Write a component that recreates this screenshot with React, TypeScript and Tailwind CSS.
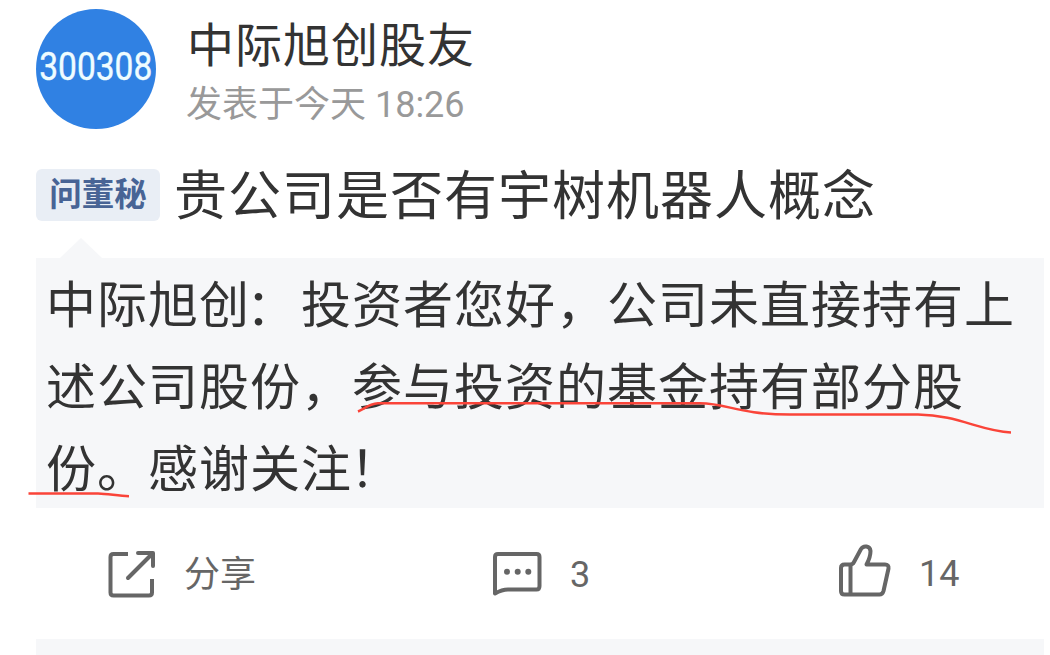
const ShareIcon = () => (
  <svg className="h-[50px] w-[50px]" viewBox="0 0 50 50" fill="none" stroke="#666" strokeWidth="4" strokeLinecap="round" strokeLinejoin="round">
    <path strokeLinecap="butt" d="M21 5H6.500Q3.500 5 3.500 8V43.500Q3.500 46.500 6.500 46.500H42Q45 46.500 45 43.500V30" />
    <path d="M31 4H46V17" />
    <path d="M45 5L21 29" />
  </svg>
)

const CommentIcon = () => (
  <svg className="h-[50px] w-[54px]" viewBox="0 0 54 50" fill="none" stroke="#666" strokeWidth="4" strokeLinejoin="round">
    <path d="M8 5H46.500Q49.500 5 49.500 8V37Q49.500 40.500 46.500 40.500H18Q12 40.500 5 44.500V8Q5 5 8 5Z" />
    <g fill="#666" stroke="none">
      <circle cx="17" cy="22.700" r="3" />
      <circle cx="27.700" cy="22.700" r="3" />
      <circle cx="38.300" cy="22.700" r="3" />
    </g>
  </svg>
)

const LikeIcon = () => (
  <svg className="mb-[10px] h-[56px] w-[56px]" viewBox="0 0 56 56" fill="none" stroke="#666" strokeWidth="4" strokeLinejoin="round">
    <path d="M15 23.500H7.500Q4 23.500 4 27V50Q4 53.500 7.500 53.500H42.500Q45.500 53.500 46.500 50L51.500 27.500Q52 23.500 48 23.500H29.500C32 19 33.500 14 33.500 10C33 4.800 26.500 4 24 8L17 21Q16 23.500 13 23.500" />
    <path d="M13.500 24V53" />
  </svg>
)

// red pen strokes under the part of the answer that matters
const Marks = () => (
  <svg className="pointer-events-none absolute left-0 top-0 h-[655px] w-[1050px]" viewBox="0 0 1050 655" fill="none" stroke="#fa4439" strokeWidth="2.500">
    <path d="M358 411.500C364 409 369 404 378 403.300H700C728 403.500 738 414.500 790 414.500H918C958 415 980 431 1011 432.500" />
    <path d="M28.500 493.500H98C108 493.700 118 496 129 496.300" />
  </svg>
)

const App = () => {
  return (
    <div lang="zh-CN" className="relative h-[655px] w-[1050px] overflow-hidden bg-white font-[Roboto,'Noto_Sans_CJK_SC',sans-serif] text-[#333]">
      <header className="flex h-[129px] pl-9 pt-[9px]">
        <div className="flex h-[120px] w-[120px] shrink-0 items-center justify-center rounded-full bg-[#3081e3]">
          <span className="-mt-1 scale-x-[0.86] text-[39px] leading-none text-[#effcff] [-webkit-text-stroke:0.4px_#effcff]">300308</span>
        </div>
        <div className="ml-[31px] flex flex-col">
          <h1 className="mt-1 h-[66px] whitespace-nowrap text-[47px] leading-[66px] tracking-[1px]">中际旭创股友</h1>
          <p className="-ml-px h-[50px] whitespace-nowrap text-[36px] leading-[52px] text-[#999]">发表于今天 18:26</p>
        </div>
      </header>

      <section className="mt-[26px] flex h-[80px] items-center pl-9">
        <span className="flex h-[52px] w-[124px] shrink-0 items-center justify-center rounded-md bg-[#e9eef5] text-[32.5px] font-bold text-[#486495]">问董秘</span>
        <h2 className="ml-[14px] whitespace-nowrap pt-1 text-[53px] leading-[80px] tracking-[1px]">贵公司是否有宇树机器人概念</h2>
      </section>

      <svg className="ml-[60px] mt-[3px] block h-5 w-[42px]" viewBox="0 0 42 20">
        <path d="M0 20L21 0L42 20Z" fill="#f6f7f9" />
      </svg>
      <section className="ml-9 h-[250px] w-[1008px] bg-[#f6f7f9] pl-[10px] pt-[7px] text-[50px] leading-[82px] tracking-[1px]">
        <p className="whitespace-nowrap">中际旭创<span className="inline-block -translate-x-1 translate-y-0.5">：</span>投资者您好，公司未直接持有上</p>
        <p className="whitespace-nowrap">述公司股份，参与投资的基金持有部分股</p>
        <p className="whitespace-nowrap">份。感谢关注<span className="inline-block -translate-x-0.5">！</span></p>
      </section>

      <footer className="flex h-[131px] items-center text-[36px] leading-none text-[#666]">
        <div className="flex w-[350px] items-center pl-[107px]">
          <ShareIcon />
          <span className="ml-[27px] pt-[3px]">分享</span>
        </div>
        <div className="flex w-[350px] items-center pl-[140px]">
          <CommentIcon />
          <span className="ml-[26px] pt-[2px]">3</span>
        </div>
        <div className="flex items-center pl-[137px]">
          <LikeIcon />
          <span className="ml-[26px]">14</span>
        </div>
      </footer>
      <div className="ml-9 h-4 w-[1008px] bg-[#f6f7f9]" />

      <Marks />
    </div>
  )
}

export default App
